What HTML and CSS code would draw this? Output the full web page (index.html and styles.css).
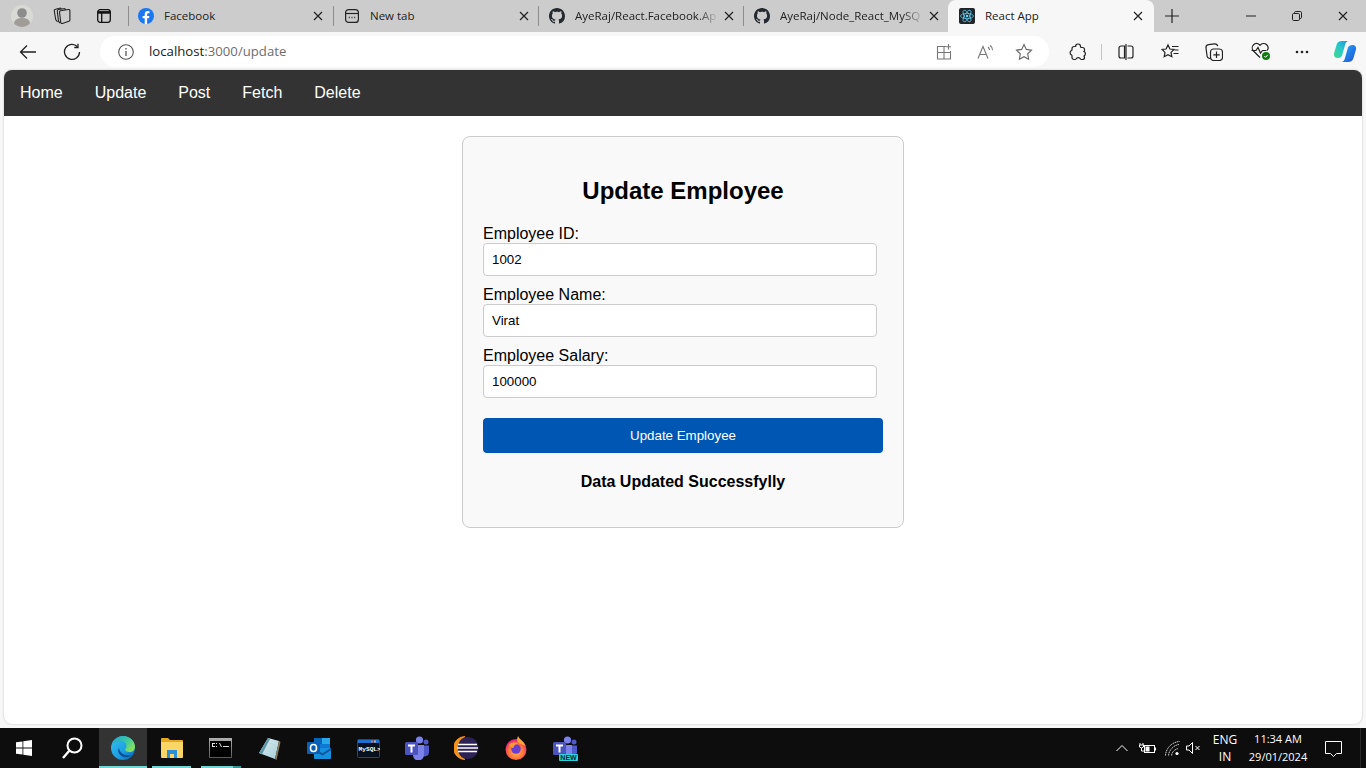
FILE: index.html
```html
<!DOCTYPE html>
<html lang="en">
<head>
<meta charset="utf-8">
<title>React App</title>
<link rel="stylesheet" href="styles.css">
</head>
<body>
<svg class="defs" width="0" height="0" aria-hidden="true">
  <defs>
    <symbol id="gh" viewBox="0 0 16 16"><path fill="#24292f" d="M8 0C3.58 0 0 3.58 0 8c0 3.54 2.29 6.53 5.47 7.59.4.07.55-.17.55-.38 0-.19-.01-.82-.01-1.49-2.01.37-2.53-.49-2.69-.94-.09-.23-.48-.94-.82-1.13-.28-.15-.68-.52-.01-.53.63-.01 1.08.58 1.23.82.72 1.21 1.87.87 2.33.66.07-.52.28-.87.51-1.07-1.78-.2-3.64-.89-3.64-3.95 0-.87.31-1.59.82-2.15-.08-.2-.36-1.02.08-2.12 0 0 .67-.21 2.2.82.64-.18 1.32-.27 2-.27.68 0 1.36.09 2 .27 1.53-1.04 2.2-.82 2.2-.82.44 1.1.16 1.92.08 2.12.51.56.82 1.27.82 2.15 0 3.07-1.87 3.75-3.65 3.95.29.25.54.73.54 1.48 0 1.07-.01 1.93-.01 2.2 0 .21.15.46.55.38A8.013 8.013 0 0016 8c0-4.42-3.58-8-8-8z"/></symbol>
    <symbol id="x" viewBox="0 0 10 10"><path d="M1 1l8 8M9 1L1 9" fill="none" stroke="#222" stroke-width="1.2"/></symbol>
    <symbol id="teamsbase" viewBox="0 0 24 24">
      <circle cx="14.500" cy="4" r="3.600" fill="#7b83eb"/><circle cx="21" cy="6" r="2.500" fill="#5059c9"/>
      <path d="M16 9.500h8v7a4 4 0 0 1-7 2.500z" fill="#5059c9"/>
      <path d="M7 9h12v9.500a5.500 5.500 0 0 1-11 1z" fill="#7b83eb"/>
      <rect x="0" y="6" width="13" height="13" rx="1.500" fill="#4b53bc"/>
      <path d="M3 9.500h7M6.500 9.500v7" stroke="#fff" stroke-width="2" fill="none"/>
    </symbol>
    <linearGradient id="edgeA" x1="0" y1="0" x2="1" y2="1"><stop offset="0" stop-color="#35c1f1"/><stop offset=".6" stop-color="#1b9de2"/><stop offset="1" stop-color="#0c59a4"/></linearGradient>
    <linearGradient id="edgeB" x1="0" y1="0" x2="1" y2=".6"><stop offset="0" stop-color="#1f9fd8"/><stop offset=".6" stop-color="#3ac9a0"/><stop offset="1" stop-color="#86e05c"/></linearGradient>
    <linearGradient id="copA" x1="0" y1="0" x2="1" y2="1"><stop offset="0" stop-color="#2fb4ee"/><stop offset=".55" stop-color="#1f7ae8"/><stop offset="1" stop-color="#2a4fd0"/></linearGradient>
    <linearGradient id="copB" x1="0" y1="1" x2="1" y2="0"><stop offset="0" stop-color="#3fd88a"/><stop offset=".5" stop-color="#2cc8c8"/><stop offset="1" stop-color="#1a8fe8"/></linearGradient>
    <linearGradient id="cmdBorder" x1="0" y1="0" x2="0" y2="1"><stop offset="0" stop-color="#b0b0b0"/><stop offset="1" stop-color="#5a5a5a"/></linearGradient>
    <linearGradient id="noteFill" x1="0" y1="0" x2="1" y2="1"><stop offset="0" stop-color="#dff0f4"/><stop offset="1" stop-color="#a6ccd6"/></linearGradient>
    <radialGradient id="fox" cx=".5" cy=".6" r=".6"><stop offset="0" stop-color="#ffbd4f"/><stop offset=".6" stop-color="#ff7139"/><stop offset="1" stop-color="#e31587"/></radialGradient>
  </defs>
</svg>

<div class="tabstrip">
  <div class="slot s44">
    <svg width="22" height="22" viewBox="0 0 22 22"><circle cx="11" cy="11" r="11" fill="#d9d9d6"/><circle cx="11" cy="8" r="4.800" fill="#8c8c8c"/><path d="M3 18.500c.5-4 3.500-5.500 8-5.500s7.500 1.500 8 5.500a11 11 0 0 1-16 0z" fill="#a09d99"/></svg>
  </div>
  <div class="slot s36">
    <svg width="18" height="18" viewBox="0 0 18 18" fill="none" stroke="#222" stroke-width="1.100"><path d="M7.500 3.800L15.500 2.500a1.200 1.200 0 0 1 1.400 1.200v9.200a1.300 1.300 0 0 1-1 1.300l-6.500 2.200a1.300 1.300 0 0 1-1.700-1.200L6.500 5a1.200 1.200 0 0 1 1-1.200z"/><path d="M12.500 2.900L11.800 1.500 5.500 2.500a1.500 1.500 0 0 0-1.200 1.700l1.200 10 1.500 2"/><path d="M8.500 1.900L7.500 1 2.500 2.200A1.500 1.500 0 0 0 1.300 4l1.400 8.500 1.800 2.500"/></svg>
  </div>
  <div class="slot s48">
    <svg width="16" height="16" viewBox="0 0 16 16" fill="none" stroke="#111" stroke-width="1.300"><rect x="1.700" y="1.700" width="12.600" height="12.600" rx="2.500"/><path d="M1.700 4.400h12.600" stroke-width="2.600"/><path d="M5.700 5v9.300"/></svg>
  </div>

  <div class="tab tab-first sep-left">
    <svg class="fav" width="16" height="16" viewBox="0 0 16 16"><circle cx="8" cy="8" r="8" fill="#1877f2"/><path d="M11 10.300l.4-2.300H9.100V6.500c0-.7.3-1.300 1.400-1.300h1V3.200s-.9-.2-1.800-.2C7.900 3 6.700 4.100 6.700 6.200V8H4.600v2.300h2.100V16h2.400v-5.700z" fill="#fff"/></svg>
    <span class="tab-title">Facebook</span>
    <svg class="close" width="10" height="10"><use href="#x"/></svg>
  </div>
  <div class="tab sep-left">
    <svg class="fav" width="16" height="16" viewBox="0 0 16 16" fill="none" stroke="#222" stroke-width="1.200"><rect x="1.600" y="1.600" width="12.800" height="12.800" rx="3"/><path d="M1.600 5.500h12.800"/><path d="M4.800 9.500h1M7.500 9.500h1M10.200 9.500h1" stroke-width="1.600"/></svg>
    <span class="tab-title">New tab</span>
    <svg class="close" width="10" height="10"><use href="#x"/></svg>
  </div>
  <div class="tab sep-left">
    <svg class="fav" width="16" height="16"><use href="#gh"/></svg>
    <span class="tab-title fade">AyeRaj/React.Facebook.Ap</span>
    <svg class="close" width="10" height="10"><use href="#x"/></svg>
  </div>
  <div class="tab sep-left">
    <svg class="fav" width="16" height="16"><use href="#gh"/></svg>
    <span class="tab-title fade">AyeRaj/Node_React_MySQ</span>
    <svg class="close" width="10" height="10"><use href="#x"/></svg>
  </div>
  <div class="tab active">
    <svg class="fav" width="16" height="16" viewBox="0 0 16 16"><rect width="16" height="16" rx="2" fill="#20232a"/><g fill="none" stroke="#61dafb" stroke-width=".7"><ellipse cx="8" cy="8" rx="6.500" ry="2.600"/><ellipse cx="8" cy="8" rx="6.500" ry="2.600" transform="rotate(60 8 8)"/><ellipse cx="8" cy="8" rx="6.500" ry="2.600" transform="rotate(120 8 8)"/></g><circle cx="8" cy="8" r="1.300" fill="#61dafb"/></svg>
    <span class="tab-title">React App</span>
    <svg class="close" width="10" height="10"><use href="#x"/></svg>
  </div>
  <div class="slot s36">
    <svg width="14" height="14" viewBox="0 0 14 14"><path d="M7 0v14M0 7h14" stroke="#222" stroke-width="1.200"/></svg>
  </div>
  <div class="grow"></div>
  <div class="slot s46"><svg width="10" height="10" viewBox="0 0 10 10"><path d="M0 5h10" stroke="#222"/></svg></div>
  <div class="slot s46"><svg width="10" height="10" viewBox="0 0 10 10" fill="none" stroke="#222"><rect x=".5" y="2.500" width="7" height="7" rx="1.200"/><path d="M2.500 2.500V1.700A1.200 1.200 0 0 1 3.700.5h4.600a1.200 1.200 0 0 1 1.200 1.200v4.600a1.200 1.200 0 0 1-1.200 1.200h-.8"/></svg></div>
  <div class="slot s46"><svg width="10" height="10"><use href="#x"/></svg></div>
</div>

<div class="toolbar">
  <div class="slot s44 first">
    <svg width="18" height="16" viewBox="0 0 18 16" fill="none" stroke="#222" stroke-width="1.300"><path d="M17 8H1.500M8 1.500L1.500 8 8 14.500"/></svg>
  </div>
  <div class="slot s44">
    <svg width="18" height="18" viewBox="0 0 18 18" fill="none" stroke="#222" stroke-width="1.300"><path d="M14.500 3.800A7.500 7.500 0 1 0 16.500 9"/><path d="M15 .8v3.700h-3.700"/></svg>
  </div>
  <div class="address">
    <div class="slot s24">
      <svg width="16" height="16" viewBox="0 0 16 16" fill="none" stroke="#555" stroke-width="1.100"><circle cx="8" cy="8" r="7.300"/><path d="M8 7v5M8 4v1.400" stroke-width="1.300"/></svg>
    </div>
    <span class="url">localhost<span class="url-dim">:3000/update</span></span>
    <div class="grow"></div>
    <div class="slot s40">
      <svg width="16" height="16" viewBox="0 0 16 16" fill="none" stroke="#777" stroke-width="1.100"><path d="M10 2.500H1.500v12.500h13V7M8 2.500V15M1.500 8.500h13M12.500 0v5.500M10 2.800h5"/></svg>
    </div>
    <div class="slot s40 read">
      <svg width="18" height="16" viewBox="0 0 18 16" fill="none" stroke="#777" stroke-width="1.100"><path d="M1 14.500L6 2.500l5 12M2.800 10.500h6.500"/><path d="M11 3c1 .8 1.500 1.800 1.500 3M13 1.200c1.700 1.300 2.500 3 2.500 5"/></svg>
    </div>
    <div class="slot s40">
      <svg width="18" height="18" viewBox="0 0 18 18" fill="none" stroke="#666" stroke-width="1.100"><path d="M9 1.500l2.300 4.900 5.200.7-3.800 3.700.9 5.400L9 13.700l-4.600 2.500.9-5.400-3.800-3.700 5.200-.7z"/></svg>
    </div>
  </div>
  <div class="slot s44 after-address">
    <svg width="18" height="18" viewBox="0 0 18 18" fill="none" stroke="#222" stroke-width="1.200"><path d="M6.500 3.500a2.500 2.500 0 0 1 5 0 1 1 0 0 0 1 1h1a2 2 0 0 1 2 2v1a1 1 0 0 1-.5 1 2.500 2.500 0 0 1 0 4.500 1 1 0 0 0 .5 1v.5a2 2 0 0 1-2 2h-1a1 1 0 0 1-1-.5 2.500 2.500 0 0 0-4.500 0 1 1 0 0 1-1 .5h-1a2 2 0 0 1-2-2v-1.500a1 1 0 0 0-.5-1 2.500 2.500 0 0 1 0-4.500 1 1 0 0 0 .5-1v-1a2 2 0 0 1 2-2h1a1 1 0 0 0 1-1z"/></svg>
  </div>
  <div class="tool-sep"></div>
  <div class="slot s44">
    <svg width="16" height="16" viewBox="0 0 16 16" fill="none" stroke="#222" stroke-width="1.200"><path d="M6.500 2H3A2 2 0 0 0 1 4v8a2 2 0 0 0 2 2h3.500zM9.500 2H13a2 2 0 0 1 2 2v8a2 2 0 0 1-2 2H9.500M8 0v16"/></svg>
  </div>
  <div class="slot s44">
    <svg width="18" height="18" viewBox="0 0 18 18" fill="none" stroke="#222" stroke-width="1.200"><path d="M7 2l1.900 4 4.100.5-3 2.900.8 4.300L7 11.600l-3.800 2.100.8-4.300-3-2.900L5.100 6z"/><path d="M11 3.500h6.500M13.500 7h4M12.500 10.500h5"/></svg>
  </div>
  <div class="slot s44">
    <svg width="18" height="18" viewBox="0 0 18 18" fill="none" stroke="#222" stroke-width="1.200"><path d="M5 15.500A3 3 0 0 1 2 12.500L1 5a3 3 0 0 1 2.500-3.300L9.500.9a3 3 0 0 1 3.200 2.300"/><rect x="5.500" y="6" width="12" height="11.500" rx="3" fill="#f7f7f7"/><path d="M11.500 8.500v6.500M8.300 11.800h6.400"/></svg>
  </div>
  <div class="slot s44 health">
    <svg width="20" height="19" viewBox="0 0 20 19" fill="none" stroke="#222" stroke-width="1.200"><path d="M9 15.500L2.500 9a4.400 4.400 0 0 1 0-6.200 4.400 4.400 0 0 1 6 0L9 3.300l.5-.5a4.400 4.400 0 0 1 6.200 0 4.400 4.400 0 0 1 .5 5.700"/><path d="M.5 8.500h4.500l2-3 2.500 5.500 2-2.500h4"/><circle cx="15" cy="14" r="4" fill="#107c10" stroke="none"/><path d="M13.300 14l1.300 1.300 2.100-2.400" stroke="#fff" stroke-width="1"/></svg>
  </div>
  <div class="slot s44">
    <svg width="14" height="4" viewBox="0 0 14 4" fill="#222"><circle cx="2" cy="2" r="1.300"/><circle cx="7" cy="2" r="1.300"/><circle cx="12" cy="2" r="1.300"/></svg>
  </div>
  <div class="slot s42">
    <svg width="24" height="23" viewBox="0 0 24 23"><path d="M9 1H16C13.500 1 12.500 3 12 5L9.500 14C9 17 7 18 4.500 18 2 18 .5 16 1 13.500L3.500 5C4.200 2.500 6 1 9 1z" fill="url(#copB)"/><path d="M15 22H8C10.500 22 11.500 20 12 18L14.500 9C15 6 17 5 19.500 5 22 5 23.500 7 23 9.500L20.500 18C19.800 20.500 18 22 15 22z" fill="url(#copA)"/></svg>
  </div>
</div>

<div class="viewport">
  <div class="page">
    <nav class="navbar">
      <a class="nav-link">Home</a>
      <a class="nav-link">Update</a>
      <a class="nav-link">Post</a>
      <a class="nav-link">Fetch</a>
      <a class="nav-link">Delete</a>
    </nav>
    <main class="card">
      <h2 class="card-title">Update Employee</h2>
      <form>
        <div class="field">
          <label class="field-label" for="id">Employee ID:</label>
          <input class="field-input" id="id" type="text" value="1002">
        </div>
        <div class="field">
          <label class="field-label" for="name">Employee Name:</label>
          <input class="field-input" id="name" type="text" value="Virat">
        </div>
        <div class="field">
          <label class="field-label" for="salary">Employee Salary:</label>
          <input class="field-input" id="salary" type="text" value="100000">
        </div>
        <button class="submit" type="button">Update Employee</button>
      </form>
      <p class="message">Data Updated Successfylly</p>
    </main>
  </div>
</div>

<footer class="taskbar">
  <div class="tb s48">
    <svg width="16" height="16" viewBox="0 0 16 16" fill="#fff"><path d="M0 2.300l6.500-.9v6.200H0zM7.300 1.300L16 0v7.600H7.300zM0 8.400h6.500v6.200L0 13.700zM7.300 8.400H16V16l-8.700-1.200z"/></svg>
  </div>
  <div class="tb s48 search">
    <svg width="22" height="24" viewBox="0 0 22 24" fill="none" stroke="#fff" stroke-width="2"><circle cx="13.500" cy="9.500" r="7"/><path d="M8.500 14.500L2 22" stroke-width="2.400"/></svg>
  </div>
  <div class="tb s48 tb-active running-full">
    <svg width="24" height="24" viewBox="0 0 24 24"><circle cx="12" cy="12" r="12" fill="url(#edgeA)"/><path d="M1 9C3 3 8 0 12 0c7 0 12 5 12 11 0 3-2.500 5-5.500 5-2.500 0-4.500-1-4.500-2.500 0-1 1.500-1.500 1.500-3.500 0-3-2.500-5-5.500-5C6 5 3 6.500 1 9z" fill="url(#edgeB)"/><path d="M8 12c-2 3 0 8 5 9 3 .5 6-.5 8-2.500-2 1-5 1.200-7.500.2C10 17.500 8.500 15 8 12z" fill="#0f4f99"/></svg>
  </div>
  <div class="tb s49 running-part">
    <svg width="22" height="20" viewBox="0 0 22 20"><path d="M0 1a1 1 0 0 1 1-1h6l2 2h12a1 1 0 0 1 1 1v4H0z" fill="#e8a91e"/><path d="M0 4h22v15a1 1 0 0 1-1 1H1a1 1 0 0 1-1-1z" fill="#fbd666"/><path d="M6 20v-8h10v8h-3v-4H9v4z" fill="#2b8fd8"/></svg>
  </div>
  <div class="tb s48 running-two">
    <svg width="23" height="20" viewBox="0 0 23 20"><rect x=".5" y=".5" width="22" height="19" fill="#000" stroke="url(#cmdBorder)"/><rect x="1" y="1" width="21" height="2" fill="#a8a8a8"/><path d="M3 5h3v1H3zM3 5h1v4H3zM3 8h3v1H3zM7 5h1v1H7zM7 8h1v1H7zM10 5l1 0 2 4-1 0zM14 8h6v1h-6z" fill="#e0e0e0"/></svg>
  </div>
  <div class="tb s50">
    <svg width="23" height="23" viewBox="0 0 23 23"><path d="M10 1l11 3-4 18L1 16z" fill="url(#noteFill)"/><path d="M10 1L1 16l3 1.500L12 2z" fill="#5f97aa"/><path d="M21 4l1.500 1-4 18-1.500-1z" fill="#8a7a60"/><path d="M11 6l7 2M9 10l7 2M7 13l7 2" stroke="#b8d8e0" stroke-width=".8"/></svg>
  </div>
  <div class="tb s50">
    <svg width="24" height="22" viewBox="0 0 24 22"><rect x="7" y="1" width="16" height="11" fill="#0f78d4"/><rect x="7" y="1" width="8" height="6" fill="#0364b8"/><rect x="15" y="1" width="8" height="6" fill="#28a8ea"/><path d="M7 11h17v10a1 1 0 0 1-1 1H8a1 1 0 0 1-1-1z" fill="#1490df"/><path d="M7 11l8.500 5.500L24 11v2l-8.500 5.500L7 13z" fill="#0a4f91"/><rect y="5" width="13" height="12" rx="1" fill="#0a5fb4"/><ellipse cx="6.500" cy="11" rx="3" ry="3.500" fill="none" stroke="#fff" stroke-width="1.600"/></svg>
  </div>
  <div class="tb s48">
    <svg width="23" height="19" viewBox="0 0 23 19"><rect x=".5" y=".5" width="22" height="18" rx="1" fill="#06101e" stroke="#1a4a86"/><rect x="1" y="1" width="21" height="3" fill="#1e6fd0"/><rect x="14" y="1.500" width="2" height="2" fill="#e06a5a"/><rect x="17" y="1.500" width="2" height="2" fill="#e0a85a"/><text class="mysql-text" x="1.500" y="12">MySQL&gt;</text></svg>
  </div>
  <div class="tb s50"><svg width="24" height="24"><use href="#teamsbase"/></svg></div>
  <div class="tb s49">
    <svg width="25" height="24" viewBox="0 0 25 24"><circle cx="13.500" cy="12" r="11" fill="#2c2255"/><path d="M11 .5A11.500 11.500 0 0 0 11 23.500 12.500 12.500 0 0 1 11 .5z" fill="#f7941e" stroke="#f7941e" stroke-width=".8"/><path d="M4 8.500h19M3 12h21M4 15.500h19" stroke="#fff" stroke-width="1.700"/></svg>
  </div>
  <div class="tb s49">
    <svg width="24" height="24" viewBox="0 0 24 24"><circle cx="12" cy="13.500" r="10.500" fill="url(#fox)"/><path d="M14 0c1 3 6 5 7.500 10l-7-3c-2-2-1.500-5-.5-7z" fill="#ffa436"/><circle cx="12" cy="13" r="4.800" fill="#6a3fd0"/><path d="M5 9c2-3 7-3 9-1-3 0-4.500 2-4.500 4-2 0-3.500-1-4.500-3z" fill="#ff9a2e"/></svg>
  </div>
  <div class="tb s50 teams-new">
    <svg width="24" height="24"><use href="#teamsbase"/></svg>
    <span class="new-badge">NEW</span>
  </div>
  <div class="grow"></div>
  <div class="tb s24">
    <svg width="12" height="8" viewBox="0 0 12 8" fill="none" stroke="#fff"><path d="M.5 7L6 1.500 11.500 7"/></svg>
  </div>
  <div class="tb s26">
    <svg width="17" height="12" viewBox="0 0 17 12" fill="none" stroke="#fff"><rect x="5.500" y="3.500" width="10" height="7"/><path d="M16.500 5.500v3"/><rect x="6.500" y="4.500" width="4" height="5" fill="#fff" stroke="none"/><path d="M1 1v2M4 1v2M.5 3h4v2l-2 1-2-1zM2.500 6v3h3"/></svg>
  </div>
  <div class="tb s24">
    <svg width="15" height="15" viewBox="0 0 15 15" fill="none" stroke="#ccc"><path d="M.5 14.500C1 7 7 1 14.500.5M3.500 14.500C4 9 9 4 14 3.500M6.500 14.500C7 11 10 8 13.500 7.500" stroke-dasharray="1.500 .6"/><circle cx="12" cy="12.500" r="1.600" fill="#fff" stroke="none"/></svg>
  </div>
  <div class="tb s19">
    <svg width="15" height="12" viewBox="0 0 15 12" fill="none" stroke="#fff"><path d="M.5 4v4h2.500l3.500 3.500V.5L3 4zM9.500 4l4 4M13.500 4l-4 4"/></svg>
  </div>
  <div class="lang">ENG<br>IN</div>
  <div class="clock">11:34 AM<br>29/01/2024</div>
  <div class="tb s44">
    <svg width="17" height="17" viewBox="0 0 17 17" fill="none" stroke="#fff"><path d="M.5 1.500h16v12h-5l-3 3-3-3h-5z"/></svg>
  </div>
  <div class="desktop-edge"></div>
</footer>
</body>
</html>
```

FILE: styles.css
```css
* { box-sizing: border-box; }

html, body {
  margin: 0;
  height: 100%;
  overflow: hidden;
}

body {
  display: flex;
  flex-direction: column;
  height: 768px;
  background: #f7f7f7;
  font-family: "Liberation Sans", Arial, sans-serif;
}

.defs { position: absolute; }

.grow { flex: 1; }

.slot, .tb {
  display: flex;
  align-items: center;
  justify-content: center;
  flex: none;
}
.s19 { width: 19px; }
.s24 { width: 24px; }
.s26 { width: 26px; }
.s36 { width: 36px; }
.s40 { width: 40px; }
.s42 { width: 42px; }
.s44 { width: 44px; }
.s46 { width: 46px; }
.s48 { width: 48px; }
.s49 { width: 49px; }
.s50 { width: 50px; }

/* Tab strip */
.tabstrip {
  display: flex;
  align-items: stretch;
  height: 32px;
  flex: none;
  background: #ccc;
}

.tab {
  position: relative;
  display: flex;
  align-items: center;
  width: 205px;
  padding-left: 11px;
  flex: none;
  font-family: "Open Sans", "Noto Sans", sans-serif;
  font-size: 11.5px;
  color: #222;
}

.tab-first { padding-left: 10px; }

.sep-left::before {
  content: "";
  position: absolute;
  left: 0;
  top: 6px;
  width: 1px;
  height: 20px;
  background: #8e8e8e;
}

.tab.active {
  width: 206px;
  background: #f7f7f7;
  border-radius: 8px 8px 0 0;
}

.fav { flex: none; }

.tab-title {
  width: 144px;
  margin: 0 0 2px 10px;
  white-space: nowrap;
  overflow: hidden;
}

.active .tab-title { width: 143px; }

.fade {
  -webkit-mask-image: linear-gradient(to right, #000 85%, transparent 100%);
  mask-image: linear-gradient(to right, #000 85%, transparent 100%);
}

.close { margin-left: 5px; flex: none; }

/* Toolbar */
.toolbar {
  display: flex;
  align-items: stretch;
  height: 38px;
  flex: none;
  padding-bottom: 3px;
  padding-top: 4px;
  background: #f7f7f7;
}

.first { margin-left: 6px; }

.address {
  display: flex;
  align-items: center;
  width: 949px;
  margin-left: 6px;
  padding: 0 5px 0 14px;
  background: #fff;
  border-radius: 16px;
  flex: none;
}

.url {
  margin: 0 0 2px 11px;
  font-family: "Open Sans", "Noto Sans", sans-serif;
  font-size: 13.2px;
  color: #1a1a1a;
}

.url-dim { color: #6e6e6e; }

.read svg { margin-left: 3px; }

.after-address { margin-left: 7px; }

.tool-sep {
  width: 1px;
  height: 16px;
  margin: 8px 2px 0 1px;
  background: #c4c4c4;
  flex: none;
}

.health svg { margin-left: 5px; }

/* Page */
.viewport {
  flex: 1;
  display: flex;
  padding: 0 4px 4px;
  min-height: 0;
}

.page {
  flex: 1;
  background: #fff;
  border-radius: 8px;
  box-shadow: 0 0 2px rgba(0, 0, 0, .25);
  overflow: hidden;
}

.navbar {
  display: flex;
  background: #333;
}

.nav-link {
  padding: 14px 16px;
  font-size: 16px;
  line-height: 18px;
  color: #fff;
}

.card {
  width: 442px;
  margin: 20px auto 0;
  padding: 20px;
  background: #f9f9f9;
  border: 1px solid #ccc;
  border-radius: 8px;
}

.card-title {
  margin: 20px 0;
  font-size: 24px;
  text-align: center;
  color: #000;
}

.field { margin-bottom: 10px; }

.field-label {
  display: block;
  font-size: 16px;
  line-height: 18px;
  color: #000;
}

.field-input {
  display: block;
  width: 394px;
  height: 33px;
  padding: 8px;
  background: #fff;
  border: 1px solid #ccc;
  border-radius: 4px;
  font-family: "Liberation Sans", Arial, sans-serif;
  font-size: 13.333px;
  color: #000;
}

.submit {
  display: block;
  width: 100%;
  height: 35px;
  margin-top: 20px;
  padding: 0;
  background: #0056b3;
  border: none;
  border-radius: 4px;
  font-family: "Liberation Sans", Arial, sans-serif;
  font-size: 13.333px;
  color: #fff;
}

.message {
  margin: 20px 0 16px;
  font-size: 16px;
  line-height: 18px;
  font-weight: bold;
  text-align: center;
  color: #000;
}

/* Taskbar */
.taskbar {
  display: flex;
  align-items: stretch;
  height: 40px;
  flex: none;
  background: #0d0d0d;
  color: #fff;
  font-family: "Open Sans", "Noto Sans", sans-serif;
  font-size: 12px;
}

.search { margin-right: 3px; }

.tb { position: relative; }

.tb-active { background: #333; }

.running-full::after,
.running-part::after,
.running-two::after {
  content: "";
  position: absolute;
  bottom: 0;
  height: 2px;
  background: #6fd6d3;
}
.running-full::after { left: 0; right: 0; }
.running-part::after { left: 5px; right: 5px; }
.running-two::after {
  left: 5px;
  right: 3px;
  background: linear-gradient(to right, #6fd6d3 80%, #3a9490 80%);
}

.mysql-text {
  font-family: "Liberation Mono", monospace;
  font-size: 6.200px;
  font-weight: bold;
  fill: #fff;
}

.new-badge {
  position: absolute;
  left: 19px;
  bottom: 7px;
  width: 19px;
  background: #2ad4dc;
  border-radius: 1px;
  font-family: "Liberation Sans", sans-serif;
  font-size: 7px;
  line-height: 7px;
  font-weight: bold;
  text-align: center;
  color: #06282c;
}

.lang {
  width: 34px;
  margin-left: 5px;
  flex: none;
  text-align: center;
  line-height: 17px;
  align-self: center;
}

.clock {
  width: 66px;
  margin-left: 3px;
  flex: none;
  font-size: 11px;
  text-align: center;
  line-height: 18px;
  align-self: center;
}

.desktop-edge {
  width: 11px;
  flex: none;
  background: linear-gradient(to right, #0d0d0d 5px, #2a2a2a 5px, #2a2a2a 6px, #0d0d0d 6px);
}
```
